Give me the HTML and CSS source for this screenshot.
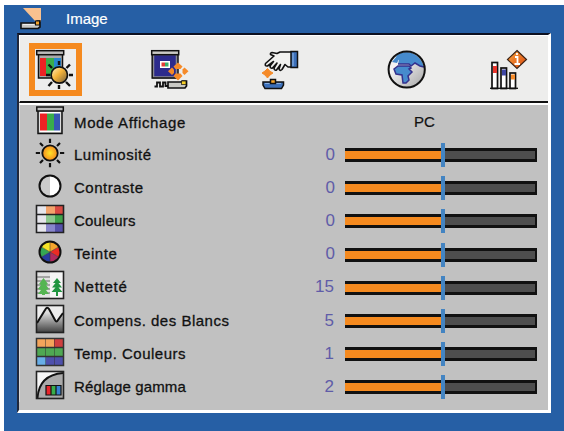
FILE: index.html
```
<!DOCTYPE html>
<html lang="fr">
<head>
  <meta charset="UTF-8" />
  <title>Image</title>
  <link rel="stylesheet" href="styles.css">
</head>
<body>
  <div class="osd">
    <div class="title">
      <svg class="logo" width="24" height="24" viewBox="0 0 24 24">
        <path d="M3 1H21V15H16Z" fill="#f9c18f"/>
        <path d="M1 16H15L17 14H20V20L18 21.500H1Z" fill="#c9c9c4" stroke="#111" stroke-width="1.6"/>
        <path d="M3 17.500H14" stroke="#eee"/>
        <rect x="15.5" y="14" width="4" height="4" fill="#f5a52c" stroke="#111"/>
      </svg>
      <span>Image</span>
    </div>

    <div class="panel">
      <!-- Onglets -->
      <div class="tabs">
        <div class="tab active">
          <svg width="42" height="42" viewBox="35 48 42 42">
            <rect x="38.5" y="53" width="24" height="24" fill="#aaa" stroke="#111" stroke-width="1.5"/>
            <path d="M40 57H46V75H40Z" fill="#ed2224"/>
            <path d="M46 57H54V75H46Z" fill="#39ad4a"/>
            <path d="M54 57H61V75H54Z" fill="#2786cf"/>
            <rect x="36.7" y="49.7" width="27" height="4" fill="#bbb" stroke="#111" stroke-width="1.5"/>
            <path d="M59 60V64M59 84V88M46 74H50M69 74H73M48.5 63.5L52 67M66 81L70 85M70 63.5L66.5 67M52 81L48.5 85" stroke="#111" stroke-width="2.4"/>
            <circle cx="59.3" cy="74" r="8.2" fill="url(#ball)" stroke="#111" stroke-width="1.7"/>
          </svg>
        </div>
        <div class="tab">
          <svg width="42" height="42" viewBox="149 48 42 42">
            <rect x="153" y="53" width="24" height="23.5" fill="#2c2b8c" stroke="#8a8a90" stroke-width="2.5"/>
            <path d="M152.2 53V77H178V53" fill="none" stroke="#111" stroke-width="1.4"/>
            <rect x="151.7" y="49.7" width="27" height="4" fill="#c9c9c4" stroke="#111" stroke-width="1.5"/>
            <rect x="160" y="60" width="10" height="7" fill="#fff"/>
            <path d="M161.5 61.5H165V65.5H161.5Z" fill="#e23c35"/>
            <path d="M165 61.5H168.5V65.5H165Z" fill="#39ad6a"/>
            <path d="M178 61.5L182.500 65.500L180.500 68H175.500L173.500 65.500Z" fill="#f58a28"/>
            <path d="M178 79.500L182.500 75L180.500 72.500H175.500L173.500 75Z" fill="#f58a28"/>
            <path d="M168 70.200L172 66.500L174 68.500V72L172 74Z" fill="#f58a28"/>
            <path d="M188.500 70.200L184.500 66.500L182.500 68.500V72L184.500 74Z" fill="#f58a28"/>
            <path d="M154.5 85.500H157V81.500H160V85.500H163V81.500H165.500V85H169" fill="none" stroke="#111" stroke-width="1.800"/>
            <path d="M168 81H181L182.500 80H186.500V85L185 87H168Z" fill="#c9c9c4" stroke="#111" stroke-width="1.700"/>
            <rect x="181.500" y="80" width="4.500" height="3.500" fill="#f6cf27" stroke="#111" stroke-width=".7"/>
          </svg>
        </div>
        <div class="tab">
          <svg width="42" height="42" viewBox="260 48 42 42">
            <path d="M292 51H280L277 52.500L272 51.500Q270 52 270.500 53.500L274 55L265.500 62.500Q264.500 65.500 267.500 65L273.500 60.500L270 65Q270.500 68 272.500 67L277 62L274 67Q274.500 70 276.500 69L280.500 63.500L279 68Q280 70.500 282 68.500L285 63.500L288 66L292 66Z" fill="#f1f1ef" stroke="#111" stroke-width="1.600" stroke-linejoin="round"/>
            <rect x="291" y="50.500" width="6.500" height="16" fill="#3c70ba" stroke="#111" stroke-width="1.500"/>
            <path d="M293 52V65" stroke="#86aee0" stroke-width="1.200"/>
            <path d="M267.500 67.500L270 70.300L273 72L270 74L267.500 77L265 74L262 72L265 70Z" fill="#f58a28" stroke="#f58a28"/>
            <path d="M263 81H283.500V84L281.500 87.500H265L263 84Z" fill="#3c70ba" stroke="#111" stroke-width="1.500"/>
            <path d="M265 82.500H281" stroke="#86aee0"/>
            <rect x="270.500" y="78.500" width="5" height="4" fill="#f5a52c" stroke="#111" stroke-width="1.500"/>
          </svg>
        </div>
        <div class="tab">
          <svg width="42" height="42" viewBox="386 48 42 42">
            <circle cx="406.700" cy="68.500" r="17.800" fill="url(#globe)"/>
            <path d="M397 54Q401 51 407 51Q417 52 422 61L424 66L420 65L415 62L411 65L409 63L398 63L399 59L396 57Z" fill="#468bcd"/>
            <path d="M398 63H409L411 65L415 62L420 65L424 66" fill="none" stroke="#34318e" stroke-width="1.500"/>
            <path d="M394 68L398 65H409L411 67L409 68L412 71L408 75L409 79L406 82H403L402 74L396 73Z" fill="#468bcd" stroke="#34318e" stroke-width="1.500"/>
            <path d="M392 61L397 55L399 58L397 62Z" fill="#468bcd"/>
            <circle cx="406.700" cy="68.500" r="18.100" fill="none" stroke="#111" stroke-width="2"/>
          </svg>
        </div>
        <div class="tab">
          <svg width="42" height="42" viewBox="488 48 42 42">
            <rect x="492" y="61.500" width="5.500" height="26" fill="#fff" stroke="#111" stroke-width="1.700"/>
            <path d="M493 65H497V72H493Z" fill="#e8352c"/>
            <rect x="501" y="67" width="5.500" height="20.500" fill="#fff" stroke="#111" stroke-width="1.700"/>
            <path d="M502 68.500H506V74.500H502Z" fill="#3e46a4"/>
            <rect x="510" y="72" width="5.500" height="15.500" fill="#fff" stroke="#111" stroke-width="1.700"/>
            <path d="M511 73.500H515V78.500H511Z" fill="#f58a28"/>
            <path d="M490 87.300H518" stroke="#111" stroke-width="1.300"/>
            <path d="M517 49.500L526.500 58.500L517 67.500L507.500 58.500Z" fill="url(#info)" stroke="#3a2418" stroke-width="1.200"/>
            <path d="M515 56H517.500V63M514.500 63H520M517 52V54" stroke="#fff" stroke-width="1.800" fill="none"/>
          </svg>
        </div>
      </div>

      <!-- Liste des réglages -->
      <div class="list">
        <div class="row">
          <svg class="icon" width="30" height="30" viewBox="0 0 30 30">
            <rect x="3" y="4" width="24" height="23.500" fill="#bbb" stroke="#111" stroke-width="1.500"/>
            <rect x="4.500" y="6" width="21" height="20" fill="#fff"/>
            <path d="M5 7.500H12V24.500H5Z" fill="#ed2224"/>
            <path d="M12 7.500H19V24.500H12Z" fill="#39ad4a"/>
            <path d="M19 7.500H25V24.500H19Z" fill="#3657b2"/>
            <rect x="1.800" y="1" width="26.500" height="4" fill="#bbb" stroke="#111" stroke-width="1.500"/>
          </svg>
          <span class="label w1">Mode Affichage</span>
          <span class="mode">PC</span>
        </div>
        <div class="row">
          <svg class="icon" width="30" height="30" viewBox="0 0 30 30">
            <path d="M15 .8V5M15 25V29.200M.8 15H5M25 15H29.200M5 5L8 8M22 22L25 25M25 5L22 8M5 25L8 22" stroke="#111" stroke-width="2.200"/>
            <circle cx="15" cy="15" r="7.700" fill="url(#sun)" stroke="#111" stroke-width="1.800"/>
          </svg>
          <span class="label w2">Luminosité</span>
          <span class="value zero">0</span>
          <div class="bar"><div class="fill"></div><div class="mark"></div></div>
        </div>
        <div class="row">
          <svg class="icon" width="30" height="30" viewBox="0 0 30 30">
            <circle cx="15" cy="15" r="10.500" fill="#fff"/>
            <path d="M15 4.500A10.500 10.500 0 0 0 15 25.500Z" fill="#ccc"/>
            <circle cx="15" cy="15" r="10.500" fill="none" stroke="#111" stroke-width="2"/>
          </svg>
          <span class="label w3">Contraste</span>
          <span class="value zero">0</span>
          <div class="bar"><div class="fill"></div><div class="mark"></div></div>
        </div>
        <div class="row">
          <svg class="icon" width="30" height="30" viewBox="0 0 30 30">
            <path d="M2 2H11V28H2Z" fill="#e6e6ec"/>
            <path d="M11 2H20V10H11Z" fill="#f3a36b"/><path d="M20 2H28V10H20Z" fill="#d94a42"/>
            <path d="M11 10H20V19H11Z" fill="#8cc88d"/><path d="M20 10H28V19H20Z" fill="#3fa34a"/>
            <path d="M11 19H20V28H11Z" fill="#8886cc"/><path d="M20 19H28V28H20Z" fill="#5551aa"/>
            <path d="M1.500 1.500H28.500V28.500H1.500ZM2 10.500H28M2 19.500H28" fill="none" stroke="#222" stroke-width="1.600"/>
          </svg>
          <span class="label w4">Couleurs</span>
          <span class="value zero">0</span>
          <div class="bar"><div class="fill"></div><div class="mark"></div></div>
        </div>
        <div class="row">
          <svg class="icon" width="30" height="30" viewBox="0 0 30 30">
            <path d="M15 15V5A10 10 0 0 1 23.700 10Z" fill="#f5a52c"/>
            <path d="M15 15L23.700 10A10 10 0 0 1 23.700 20Z" fill="#ed2b24"/>
            <path d="M15 15L23.700 20A10 10 0 0 1 15 25Z" fill="#b22a5e"/>
            <path d="M15 15V25A10 10 0 0 1 6.300 20Z" fill="#283c9f"/>
            <path d="M15 15L6.300 20A10 10 0 0 1 6.300 10Z" fill="#35a653"/>
            <path d="M15 15L6.300 10A10 10 0 0 1 15 5Z" fill="#f5e427"/>
            <path d="M15 5V15L23.500 10M6.500 10L15 15V25M6.500 20L15 15L23.500 20" stroke="#333" stroke-width=".5" fill="none"/>
            <circle cx="15" cy="15" r="10.500" fill="none" stroke="#111" stroke-width="2"/>
          </svg>
          <span class="label w5">Teinte</span>
          <span class="value zero">0</span>
          <div class="bar"><div class="fill"></div><div class="mark"></div></div>
        </div>
        <div class="row">
          <svg class="icon" width="30" height="30" viewBox="0 0 30 30">
            <rect x="1.500" y="1.500" width="27" height="27" fill="#f5f5f5"/>
            <path d="M2 2H15V28H2Z" fill="#e2e2e2"/>
            <path d="M2 7H15M2 11H15M2 15H15M2 19H15M2 23H15" stroke="#666" stroke-width="1.100"/>
            <path d="M8.500 8L13 14L11 15L14 19L11 20L14 24H3L6 20L3 19L6 15L4 14Z" fill="#55b552"/>
            <path d="M8.500 20V25" stroke="#55b552" stroke-width="3"/>
            <path d="M22 8L26 13H23.500L27 17.500H23.500L27.500 22H16.500L20.500 17.500H17L20.500 13H18Z" fill="#209540"/>
            <path d="M22 20V26" stroke="#209540" stroke-width="2"/>
            <rect x="1.500" y="1.500" width="27" height="27" fill="none" stroke="#222" stroke-width="1.600"/>
          </svg>
          <span class="label w6">Netteté</span>
          <span class="value">15</span>
          <div class="bar"><div class="fill"></div><div class="mark"></div></div>
        </div>
        <div class="row">
          <svg class="icon" width="30" height="30" viewBox="0 0 30 30">
            <rect x="1.500" y="1.500" width="27" height="27" fill="#eee"/>
            <path d="M2 19L10 6Q12 2 14 5L20 16Q21 19 23 16L28 9V28H2Z" fill="url(#wave)"/>
            <path d="M2 19L10 6Q12 2 14 5L20 16Q21.500 19 23 16L28 9" fill="none" stroke="#111" stroke-width="2"/>
            <rect x="1.500" y="1.500" width="27" height="27" fill="none" stroke="#222" stroke-width="1.600"/>
          </svg>
          <span class="label w7">Compens. des Blancs</span>
          <span class="value">5</span>
          <div class="bar"><div class="fill"></div><div class="mark"></div></div>
        </div>
        <div class="row">
          <svg class="icon" width="30" height="30" viewBox="0 0 30 30">
            <path d="M2 2H20V10H2Z" fill="#f3a45b"/><path d="M19 2H28V10H19Z" fill="#cf3f3f"/>
            <path d="M2 10H28V19H2Z" fill="#4fa853"/>
            <path d="M2 19H11V28H2Z" fill="#68aee8"/><path d="M11 19H28V28H11Z" fill="#4e50ac"/>
            <path d="M1.500 1.500H28.500V28.500H1.500ZM2 10.500H28M2 19.500H28" fill="none" stroke="#333" stroke-width="1.500"/>
            <path d="M10.500 2V28M19.500 2V28" stroke="#333" stroke-width=".5"/>
          </svg>
          <span class="label w8">Temp. Couleurs</span>
          <span class="value">1</span>
          <div class="bar"><div class="fill"></div><div class="mark"></div></div>
        </div>
        <div class="row">
          <svg class="icon" width="30" height="30" viewBox="0 0 30 30">
            <rect x="1.500" y="1.500" width="27" height="27" fill="#f5f5f5"/>
            <path d="M3 28Q5 5 28 3V28Z" fill="#aaa"/>
            <path d="M2.500 28Q4 5 28 3" fill="none" stroke="#111" stroke-width="1.900"/>
            <path d="M11 15.500H16V25H11Z" fill="#e8262b"/>
            <path d="M16 15.500H21V25H16Z" fill="#39ad4a"/>
            <path d="M21 15.500H26V25H21Z" fill="#3581cf"/>
            <path d="M11 15.500H26V25H11ZM16 15V25M21 15V25" fill="none" stroke="#111" stroke-width="1.200"/>
            <rect x="1.500" y="1.500" width="27" height="27" fill="none" stroke="#222" stroke-width="1.600"/>
          </svg>
          <span class="label w9">Réglage gamma</span>
          <span class="value">2</span>
          <div class="bar"><div class="fill"></div><div class="mark"></div></div>
        </div>
      </div>
    </div>
  </div>

  <!-- Dégradés communs aux icônes -->
  <svg class="defs" width="0" height="0">
    <defs>
      <radialGradient id="sun"><stop offset="0" stop-color="#ffe326"/><stop offset="1" stop-color="#f58a1f"/></radialGradient>
      <linearGradient id="ball" x1="0" y1="0" x2="1" y2="1"><stop offset="0" stop-color="#fff3c9"/><stop offset=".45" stop-color="#f5b43a"/><stop offset="1" stop-color="#6d5a3c"/></linearGradient>
      <linearGradient id="globe" x1="0" y1="0" x2="1" y2="1"><stop offset=".3" stop-color="#f4f4f4"/><stop offset="1" stop-color="#a5a5a5"/></linearGradient>
      <linearGradient id="info" x1="0" y1="0" x2="1" y2="1"><stop offset="0" stop-color="#f9a33c"/><stop offset="1" stop-color="#d9480f"/></linearGradient>
      <linearGradient id="wave" x1="0" y1="0" x2="0" y2="1"><stop offset=".2" stop-color="#ddd"/><stop offset="1" stop-color="#444"/></linearGradient>
    </defs>
  </svg>
</body>
</html>
```
FILE: styles.css
```
* {
  box-sizing: border-box;
}
body {
  margin: 0;
  padding: 5px 0 0 4px;
  width: 564px;
  height: 431px;
  overflow: hidden;
  background: #fff;
  font-family: "Liberation Sans", Arial, sans-serif;
  font-size: 15px;
  color: #111;
}
.osd {
  height: 426px;
  background: #265fa5;
}
.title {
  display: flex;
  height: 28px;
  padding: 2px 0 0 16px;
  color: #fff;
  line-height: 24px;
}
.title span {
  margin-left: 22px;
  -webkit-text-stroke: 0.2px #fff;
}
.panel {
  width: 534px;
  height: 380px;
  margin-left: 13px;
  border-top: 2px solid #0c1020;
  border-left: 2px solid #20283c;
  border-right: 3px solid #fff;
  border-bottom: 3px solid #fff;
  background: #c1c1c1;
}
/* Barre d'onglets */
.tabs {
  display: grid;
  grid-template-columns: 119px 111px 126px 102px 54px;
  height: 68px;
  padding: 7px 0 0 10px;
  background: #ededec;
  border-top: 1px solid #fff;
  border-left: 1px solid #fff;
  border-bottom: 2px solid #111;
}
.tab {
  display: flex;
  height: 53px;
  align-items: center;
}
.tab svg {
  flex: none;
  margin-top: 1px;
}
.tab.active {
  width: 53px;
  margin-left: -1px;
  border: 6px solid #f58a1f;
}
.tab.active svg {
  margin-top: 0;
}
.list {
  padding-left: 16px;
  border-top: 2px solid #fff;
  border-left: 1px solid #d8d8d8;
}
/* Lignes */
.row {
  display: grid;
  grid-template-columns: 38px 216px 45px 10px 192px;
  height: 33.2px;
  align-items: center;
}
.row:first-child {
  height: 31px;
}
.icon {
  display: block;
  margin-left: -1px;
}
.label {
  padding-top: 4px;
  white-space: nowrap;
  line-height: 18px;
  -webkit-text-stroke: 0.3px #111;
}
.w1 { letter-spacing: 0.63px; }
.w2 { letter-spacing: 0.5px; }
.w3 { letter-spacing: 0.5px; }
.w4 { letter-spacing: 0.2px; }
.w5 { letter-spacing: 0.55px; }
.w6 { letter-spacing: 0.75px; }
.w7 { letter-spacing: 0.5px; }
.w8 { letter-spacing: 0.5px; }
.w9 { letter-spacing: 0.15px; padding-top: 5px; }
.mode {
  grid-column: 3 / 6;
  padding: 2px 0 0 124px;
  -webkit-text-stroke: 0.2px #111;
}
.value {
  padding: 4px 1px 0 0;
  text-align: right;
  font-size: 17px;
  line-height: 18px;
  color: #5f5ca8;
}
.value.zero {
  padding-right: 0;
}
.bar {
  position: relative;
  grid-column: 5;
  height: 14px;
  margin-top: 5px;
  background: #4e4e4e;
  border: solid #111;
  border-width: 3px 2px 3px 0;
}
.fill {
  width: 98px;
  height: 8px;
  background: #f58a1f;
}
.mark {
  position: absolute;
  left: 96px;
  top: -8px;
  width: 4px;
  height: 24px;
  background: #4384c2;
}
.defs {
  position: absolute;
}
```
